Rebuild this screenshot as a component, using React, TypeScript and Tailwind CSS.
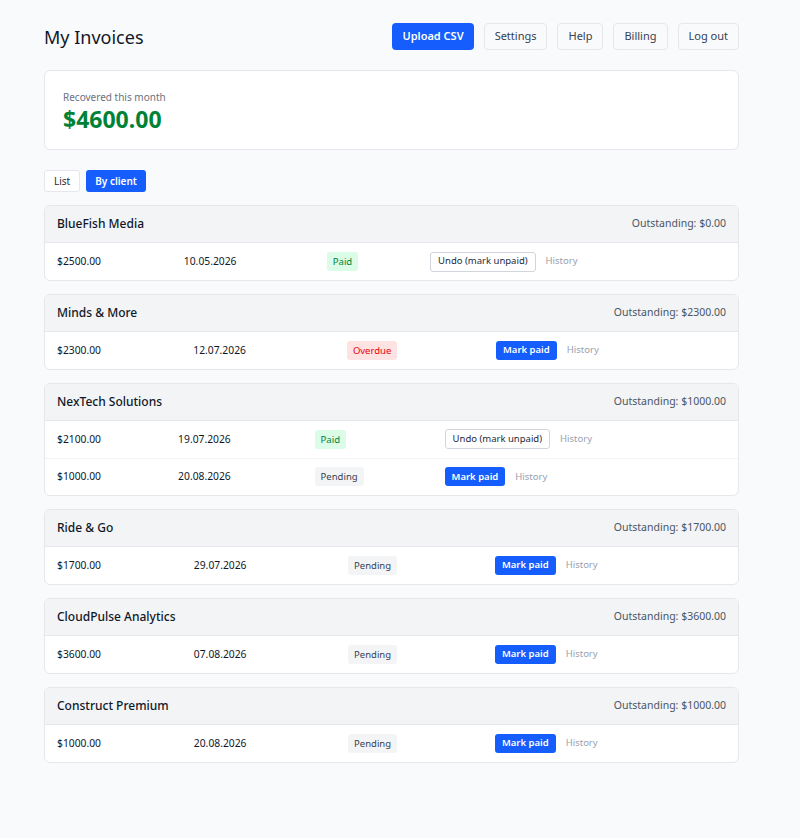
import { useState } from 'react';

type Status = 'Paid' | 'Overdue' | 'Pending';

type Invoice = { amount: string; date: string; status: Status };

type Group = { client: string; outstanding: string; invoices: Invoice[] };

const groups: Group[] = [
  { client: 'BlueFish Media', outstanding: '$0.00', invoices: [{ amount: '$2500.00', date: '10.05.2026', status: 'Paid' }] },
  { client: 'Minds & More', outstanding: '$2300.00', invoices: [{ amount: '$2300.00', date: '12.07.2026', status: 'Overdue' }] },
  {
    client: 'NexTech Solutions',
    outstanding: '$1000.00',
    invoices: [
      { amount: '$2100.00', date: '19.07.2026', status: 'Paid' },
      { amount: '$1000.00', date: '20.08.2026', status: 'Pending' },
    ],
  },
  { client: 'Ride & Go', outstanding: '$1700.00', invoices: [{ amount: '$1700.00', date: '29.07.2026', status: 'Pending' }] },
  { client: 'CloudPulse Analytics', outstanding: '$3600.00', invoices: [{ amount: '$3600.00', date: '07.08.2026', status: 'Pending' }] },
  { client: 'Construct Premium', outstanding: '$1000.00', invoices: [{ amount: '$1000.00', date: '20.08.2026', status: 'Pending' }] },
];

function Badge({ status }: { status: Status }) {
  const cls =
    status === 'Paid'
      ? 'bg-green-100 text-green-700'
      : status === 'Overdue'
        ? 'bg-red-100 text-red-600'
        : 'bg-gray-100 text-gray-700';
  return <span className={`inline-block rounded-[3px] px-[6px] py-[3px] text-[9.5px] leading-[13px] ${cls}`}>{status}</span>;
}

export default function App() {
  const [view, setView] = useState<'list' | 'client'>('client');

  return (
    <div
      className="min-h-[838px] bg-gray-50 text-gray-900"
      style={{ fontFamily: '"Noto Sans", "Open Sans", sans-serif' }}
    >
      <div className="w-[695px] ml-[44px] pt-[23px] pb-10">
        {/* 顶部 */}
        <div className="flex items-center justify-between h-[27px]">
          <h1 className="text-[18px] leading-[27px] font-normal pt-[2px]">My Invoices</h1>
          <div className="flex gap-[10px]">
            <button className="h-[27px] px-[10px] rounded-[4px] bg-blue-600 text-white text-[11px] font-semibold">Upload CSV</button>
            {['Settings', 'Help', 'Billing', 'Log out'].map((b) => (
              <button key={b} className="h-[27px] px-[10px] rounded-[4px] border border-gray-200 bg-gray-50 text-gray-700 text-[11px]">
                {b}
              </button>
            ))}
          </div>
        </div>

        {/* 本月回款 */}
        <div className="mt-5 h-[80px] rounded-md border border-gray-200 bg-white px-[18px] pt-[19px]">
          <div className="text-[10px] leading-[14px] text-gray-500">Recovered this month</div>
          <div className="text-[23px] leading-[30px] font-bold text-green-700">$4600.00</div>
        </div>

        {/* 视图切换 */}
        <div className="mt-5 flex gap-[6px]">
          <button
            onClick={() => setView('list')}
            className={`h-[22px] px-[9px] rounded-[3px] text-[10px] ${view === 'list' ? 'bg-blue-600 text-white font-semibold' : 'bg-white border border-gray-200 text-gray-800'}`}
          >
            List
          </button>
          <button
            onClick={() => setView('client')}
            className={`h-[22px] px-[9px] rounded-[3px] text-[10px] ${view === 'client' ? 'bg-blue-600 text-white font-semibold' : 'bg-white border border-gray-200 text-gray-800'}`}
          >
            By client
          </button>
        </div>

        {/* 客户分组 */}
        <div className="mt-[13px] flex flex-col gap-[13px]">
          {groups.map((g) => (
            <div key={g.client} className="rounded-md border border-gray-200 bg-white overflow-hidden">
              <div className="flex items-center justify-between bg-gray-100 px-3 h-[37px] border-b border-gray-200">
                <span className="text-[12px] font-medium text-gray-900">{g.client}</span>
                <span className="text-[10.5px] text-gray-600">Outstanding: {g.outstanding}</span>
              </div>
              <table className="w-full text-[10.3px] text-gray-900">
                <tbody>
                  {g.invoices.map((inv, i) => (
                    <tr key={i} className={i > 0 ? 'border-t border-gray-100' : ''}>
                      <td className="px-3 h-[37px]">{inv.amount}</td>
                      <td className="px-3">{inv.date}</td>
                      <td className="px-3">
                        <Badge status={inv.status} />
                      </td>
                      <td className="px-3 whitespace-nowrap">
                        <div className="flex items-center gap-[10px]">
                          {inv.status === 'Paid' ? (
                            <button className="h-[20px] px-[7px] rounded-[3px] border border-gray-300 bg-white text-[9.5px] text-gray-800">
                              Undo (mark unpaid)
                            </button>
                          ) : (
                            <button className="h-[19px] px-[7px] rounded-[3px] bg-blue-600 text-[9.5px] font-semibold text-white">
                              Mark paid
                            </button>
                          )}
                          <span className="text-[9.5px] text-gray-400">History</span>
                        </div>
                      </td>
                    </tr>
                  ))}
                </tbody>
              </table>
            </div>
          ))}
        </div>
      </div>
    </div>
  );
}
